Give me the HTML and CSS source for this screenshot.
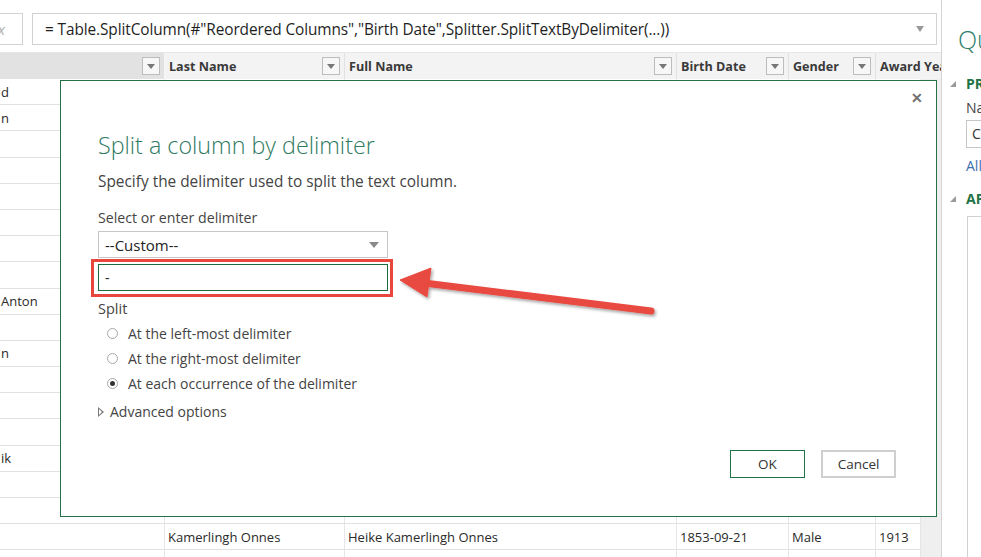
FILE: index.html
```html
<!DOCTYPE html>
<html lang="en">
<head>
  <meta charset="UTF-8">
  <title>Split a column by delimiter</title>
  <link rel="stylesheet" href="styles.css">
</head>
<body>
  <div class="app">
    <div class="main">
      <div class="formula-bar">
        <div class="fx-box"><span>fx</span></div>
        <div class="formula">
          <span class="formula-text">= Table.SplitColumn(#"Reordered Columns","Birth Date",Splitter.SplitTextByDelimiter(...))</span>
          <span class="caret small"></span>
        </div>
      </div>

      <div class="grid">
        <div class="grid-head">
          <div class="th c1 selected"><span></span><i class="filter"></i></div>
          <div class="th c2"><span>Last Name</span><i class="filter"></i></div>
          <div class="th c3"><span>Full Name</span><i class="filter"></i></div>
          <div class="th c4"><span>Birth Date</span><i class="filter"></i></div>
          <div class="th c5"><span>Gender</span><i class="filter"></i></div>
          <div class="th c6"><span>Award Year</span></div>
        </div>
        <div class="grid-body">
          <div class="rows" id="rows"></div>
          <div class="vscroll"></div>
        </div>
      </div>
    </div>

    <div class="side">
      <div class="side-title">Query Settings</div>
      <div class="side-section"><span class="tri"></span>PROPERTIES</div>
      <div class="side-label">Name</div>
      <div class="side-input">Chemistry</div>
      <div class="side-link">All Properties</div>
      <div class="side-section second"><span class="tri"></span>APPLIED STEPS</div>
      <div class="side-steps"></div>
    </div>
  </div>

  <div class="dialog">
    <span class="close">&#x2715;</span>
    <h2 class="dlg-title">Split a column by delimiter</h2>
    <p class="dlg-desc">Specify the delimiter used to split the text column.</p>
    <div class="dlg-label">Select or enter delimiter</div>
    <div class="select">
      <span>--Custom--</span>
      <span class="caret"></span>
    </div>
    <div class="highlight">
      <div class="text-input">-</div>
    </div>
    <div class="split-label">Split</div>
    <div class="radios">
      <label class="radio"><i class="dot"></i>At the left-most delimiter</label>
      <label class="radio"><i class="dot"></i>At the right-most delimiter</label>
      <label class="radio"><i class="dot checked"></i>At each occurrence of the delimiter</label>
    </div>
    <div class="advanced"><span class="adv-tri"></span>Advanced options</div>
    <div class="dlg-footer">
      <button class="btn primary">OK</button>
      <button class="btn">Cancel</button>
    </div>
  </div>

  <svg class="arrow" width="981" height="557" viewBox="0 0 981 557">
    <defs>
      <filter id="shadow" x="-10%" y="-50%" width="120%" height="200%">
        <feDropShadow dx="1.5" dy="2" stdDeviation="1.5" flood-color="#000" flood-opacity="0.35"/>
      </filter>
    </defs>
    <g filter="url(#shadow)" fill="#e84a3f" stroke="#e84a3f">
      <line x1="424" y1="283" x2="651" y2="311" stroke-width="7" stroke-linecap="round"/>
      <polygon points="400,280 431,268 427,297" stroke-width="1" stroke-linejoin="round"/>
    </g>
  </svg>

  <script>
    // rows behind the dialog: only the visible bits carry text
    var data = [
      ['d'], ['n'], [], [], [], [], [], [], ['Anton'], [],
      ['n'], [], [], [], ['ik'], [], [],
      ['', 'Kamerlingh Onnes', 'Heike Kamerlingh Onnes', '1853-09-21', 'Male', '1913'],
      []
    ];
    var rows = document.getElementById('rows');
    data.forEach(function (r) {
      var row = document.createElement('div');
      row.className = 'row';
      for (var i = 0; i < 6; i++) {
        var td = document.createElement('div');
        td.className = 'td c' + (i + 1);
        td.textContent = r[i] || '';
        row.appendChild(td);
      }
      rows.appendChild(row);
    });
  </script>
</body>
</html>
```

FILE: styles.css
```css
* {
  box-sizing: border-box;
}

body {
  margin: 0;
  width: 981px;
  height: 557px;
  overflow: hidden;
  font-family: "Open Sans", "Noto Sans", sans-serif;
  color: #333;
  background: #fff;
  position: relative;
}

.app {
  display: flex;
  height: 557px;
}

.main {
  width: 941px;
  flex: none;
  display: flex;
  flex-direction: column;
}

/* formula bar */
.formula-bar {
  height: 52px;
  display: flex;
  align-items: flex-start;
  padding-top: 13px;
}

.fx-box {
  width: 23px;
  height: 32px;
  border: 1px solid #d2d2d2;
  border-left: none;
  overflow: hidden;
  display: flex;
  align-items: center;
  justify-content: flex-end;
  padding-right: 17px;
  color: #b0b0b0;
  font-size: 15px;
  font-style: italic;
}

.formula {
  margin-left: 9px;
  width: 905px;
  height: 32px;
  border: 1px solid #d2d2d2;
  display: flex;
  align-items: center;
  justify-content: space-between;
  padding: 0 12px 0 12px;
}

.formula-text {
  font-size: 15.4px;
  color: #1f1f1f;
  white-space: nowrap;
  letter-spacing: -0.1px;
}

.caret {
  width: 0;
  height: 0;
  border-left: 5px solid transparent;
  border-right: 5px solid transparent;
  border-top: 6px solid #8a8a8a;
}

.caret.small {
  border-left-width: 4px;
  border-right-width: 4px;
  border-top-width: 6px;
  border-top-color: #999;
}

/* grid */
.grid {
  flex: 1;
  display: flex;
  flex-direction: column;
  overflow: hidden;
}

.grid-head {
  display: flex;
  height: 27px;
  background: #f3f3f3;
  border-top: 1px solid #e6e6e6;
}

.th {
  display: flex;
  align-items: center;
  justify-content: space-between;
  padding: 0 4px 0 4px;
  font-size: 12.6px;
  font-weight: bold;
  color: #3a3a3a;
  border-right: 1px solid #e2e2e2;
  white-space: nowrap;
  overflow: hidden;
}

.th.selected {
  background: #e2e2e2;
  border-right-color: #f7f7f7;
}

.th.c6 {
  flex: 1;
  border-right: none;
  padding-right: 0;
}

.filter {
  width: 18px;
  height: 18px;
  flex: none;
  border: 1px solid #bdbdbd;
  background: #f7f7f7;
  position: relative;
}

.filter::after {
  content: "";
  position: absolute;
  left: 4px;
  top: 6px;
  border-left: 4px solid transparent;
  border-right: 4px solid transparent;
  border-top: 5px solid #777;
}

.c1 { width: 165px; flex: none; }
.c2 { width: 180px; flex: none; }
.c3 { width: 332px; flex: none; }
.c4 { width: 112px; flex: none; }
.c5 { width: 87px; flex: none; }
.c6 { width: 45px; flex: none; }

.grid-body {
  flex: 1;
  display: flex;
  overflow: hidden;
}

.rows {
  width: 921px;
  flex: none;
}

.row {
  display: flex;
  height: 26.2px;
  border-bottom: 1px solid #e1e1e1;
}

.td {
  font-size: 13px;
  color: #2a2a2a;
  display: flex;
  align-items: center;
  padding-left: 3px;
  border-right: 1px solid #e6e6e6;
  white-space: nowrap;
  overflow: hidden;
}

.td.c1 {
  padding-left: 1px;
}

.vscroll {
  flex: 1;
  background: #efefef;
}

/* right panel */
.side {
  flex: 1;
  border-left: 1px solid #d4d4d4;
  padding: 22px 0 0 8px;
  overflow: hidden;
  white-space: nowrap;
}

.side-title {
  font-size: 25px;
  font-weight: 300;
  color: #2f7f6a;
  padding-left: 8px;
  line-height: 34px;
}

.side-section {
  margin-top: 18px;
  font-size: 14px;
  font-weight: bold;
  color: #217346;
  display: flex;
  align-items: center;
}

.side-section.second {
  margin-top: 14px;
}

.tri {
  width: 0;
  height: 0;
  border-left: 6px solid transparent;
  border-bottom: 6px solid #9a9a9a;
  margin-right: 10px;
}

.side-label {
  margin: 5px 0 0 16px;
  font-size: 14px;
  color: #444;
}

.side-input {
  margin: 3px 0 0 16px;
  height: 28px;
  border: 1px solid #c6c6c6;
  border-right: none;
  padding-left: 5px;
  font-size: 14px;
  line-height: 26px;
  color: #333;
}

.side-link {
  margin: 8px 0 0 16px;
  font-size: 14px;
  color: #3c6fb0;
}

.side-steps {
  margin: 8px 0 0 17px;
  height: 400px;
  border: 1px solid #d0d0d0;
  border-right: none;
}

/* dialog */
.dialog {
  position: absolute;
  left: 60px;
  top: 80px;
  width: 877px;
  height: 437px;
  background: #fff;
  border: 1px solid #217346;
  padding: 48px 40px 0 37px;
}

.close {
  position: absolute;
  right: 13px;
  top: 7px;
  font-size: 14px;
  font-weight: bold;
  color: #707070;
}

.dlg-title {
  margin: 0;
  font-size: 23.3px;
  font-weight: 300;
  line-height: 32px;
  color: #2f7a5f;
}

.dlg-desc {
  margin: 11px 0 0 0;
  font-size: 15.4px;
  line-height: 20px;
  color: #444;
}

.dlg-label {
  margin-top: 16px;
  font-size: 14.2px;
  line-height: 20px;
  color: #444;
}

.select {
  margin-top: 3px;
  width: 290px;
  height: 27px;
  border: 1px solid #c6c6c6;
  display: flex;
  align-items: center;
  justify-content: space-between;
  padding: 0 8px 0 6px;
  font-size: 15px;
  color: #222;
}

.highlight {
  margin: 1px 0 0 -7px;
  width: 302px;
  height: 38px;
  border: 3px solid #e8473d;
  padding: 2px 2px 3px 4px;
}

.text-input {
  height: 27px;
  border: 1px solid #1e6b42;
  padding-left: 6px;
  font-size: 14px;
  line-height: 25px;
  color: #222;
}

.split-label {
  margin-top: 2px;
  font-size: 14.5px;
  line-height: 20px;
  color: #444;
}

.radios {
  margin-top: 2px;
  display: flex;
  flex-direction: column;
}

.radio {
  display: flex;
  align-items: center;
  height: 25px;
  font-size: 14px;
  color: #444;
  padding-left: 9px;
}

.dot {
  width: 11px;
  height: 11px;
  border: 1px solid #a8a8a8;
  border-radius: 50%;
  margin-right: 10px;
  display: flex;
  align-items: center;
  justify-content: center;
}

.dot.checked::after {
  content: "";
  width: 5px;
  height: 5px;
  border-radius: 50%;
  background: #333;
}

.advanced {
  margin-top: 6px;
  display: flex;
  align-items: center;
  font-size: 14px;
  line-height: 20px;
  color: #444;
}

.adv-tri {
  width: 0;
  height: 0;
  border-top: 5px solid transparent;
  border-bottom: 5px solid transparent;
  border-left: 6px solid #777;
  margin-right: 6px;
  position: relative;
}

.adv-tri::after {
  content: "";
  position: absolute;
  left: -5px;
  top: -3px;
  border-top: 3px solid transparent;
  border-bottom: 3px solid transparent;
  border-left: 3.5px solid #fff;
}

.dlg-footer {
  margin-top: 28px;
  display: flex;
  justify-content: flex-end;
  gap: 16px;
}

.btn {
  width: 75px;
  height: 28px;
  background: #fff;
  border: 2px solid #cfcfcf;
  font-family: inherit;
  font-size: 13.5px;
  color: #333;
}

.btn.primary {
  border: 1.5px solid #217346;
}

.arrow {
  position: absolute;
  left: 0;
  top: 0;
  pointer-events: none;
}
```
